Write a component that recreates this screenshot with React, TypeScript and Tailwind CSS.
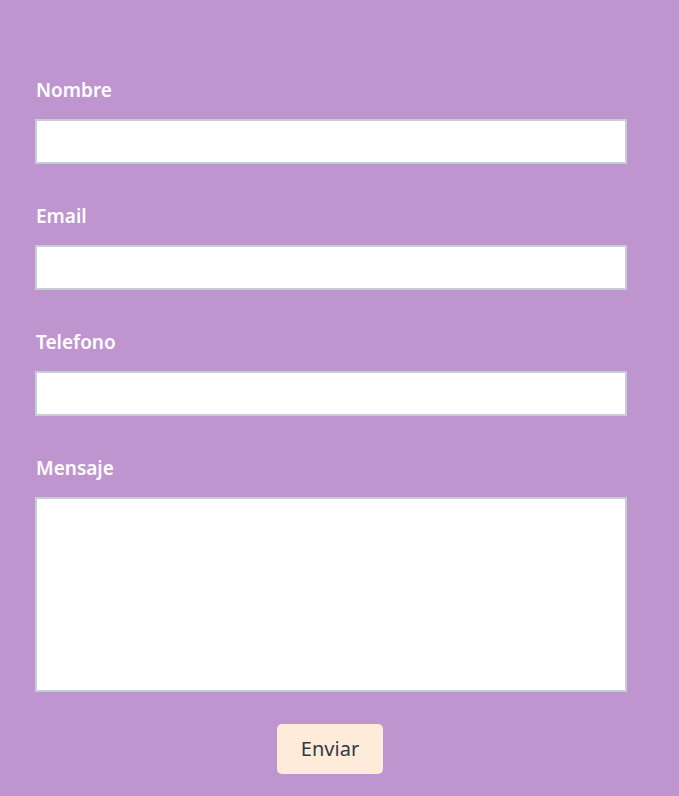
import React from "react";

const fields = [
  { id: "nombre", label: "Nombre", type: "text" },
  { id: "email", label: "Email", type: "email" },
  { id: "telefono", label: "Telefono", type: "tel" },
];

export default function App() {
  return (
    <div
      className="min-h-screen bg-[#bf95d0] pt-[76px]"
      style={{ fontFamily: '"Noto Sans", "Open Sans", sans-serif' }}
    >
      <form className="w-[592px] ml-[35px] flex flex-col">
        {fields.map((f) => (
          <div key={f.id} className="flex flex-col mb-[38px]">
            <label
              htmlFor={f.id}
              className="text-white text-[19px] font-semibold leading-[28px] mb-[15px] pl-[1px]"
            >
              {f.label}
            </label>
            <input
              id={f.id}
              type={f.type}
              className="h-[45px] bg-white border-2 border-solid border-[#c5ced8] outline-none px-2"
            />
          </div>
        ))}
        <div className="flex flex-col">
          <label
            htmlFor="mensaje"
            className="text-white text-[19px] font-semibold leading-[28px] mb-[15px] pl-[1px]"
          >
            Mensaje
          </label>
          <textarea
            id="mensaje"
            className="h-[195px] bg-white border-2 border-solid border-[#c5ced8] outline-none resize-none px-2"
          />
        </div>
        <div className="flex justify-center mt-[32px] pr-[2px]">
          <button
            type="button"
            className="w-[106px] h-[50px] rounded-[5px] bg-[#ffebd9] text-[#2f3a44] text-[20px]"
          >
            Enviar
          </button>
        </div>
      </form>
    </div>
  );
}
